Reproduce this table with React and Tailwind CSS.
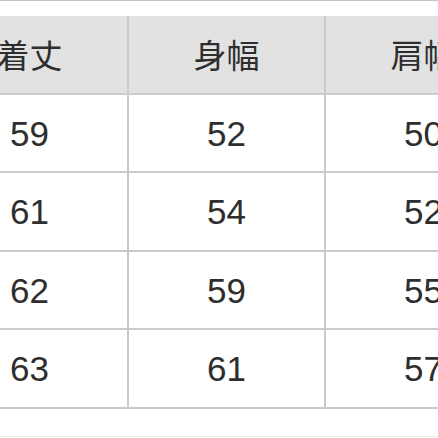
const headers = ['着丈', '身幅', '肩幅']
const rows = [
  ['59', '52', '50'],
  ['61', '54', '52'],
  ['62', '59', '55'],
  ['63', '61', '57'],
]

export default function App() {
  return (
    <div
      className="w-[438px] h-[438px] overflow-hidden bg-white border-t border-[#c4c4c4] text-[#2e2e2e]"
      style={{ fontFamily: '"Liberation Sans", Arial, "Noto Sans CJK JP", sans-serif' }}
    >
      <div className="pt-[15px] pb-[27px] border-b border-[#ececec]">
        <div className="ml-[-68px] w-[600px] grid grid-cols-[195px_195px_195px] gap-[2px] pb-[2px] bg-[#cbcbcb]">
          {headers.map((h) => (
            <div
              key={h}
              className="h-[76.5px] bg-[#e2e2e2] flex items-center justify-center text-[33px]"
              style={{ fontFamily: '"Noto Sans CJK JP", sans-serif' }}
            >
              {h}
            </div>
          ))}
          {rows.map((r, i) =>
            r.map((v, j) => (
              <div key={i + '-' + j} className="h-[76.5px] bg-white flex items-center justify-center text-[35px] pt-[2px]">
                {v}
              </div>
            ))
          )}
        </div>
      </div>
    </div>
  )
}
